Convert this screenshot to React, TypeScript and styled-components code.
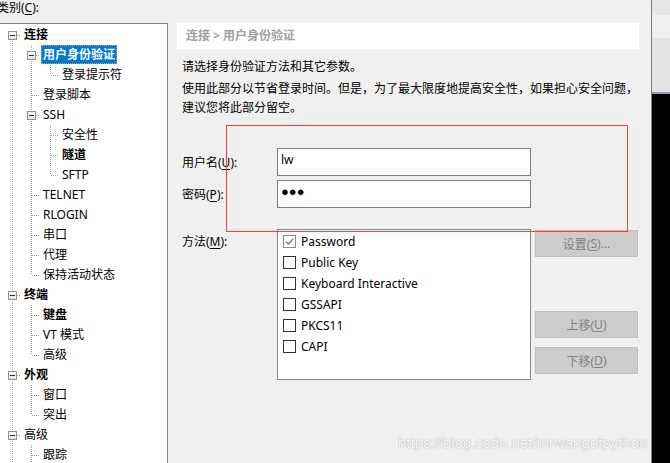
import React from "react";
import styled, { createGlobalStyle, css } from "styled-components";

const Global = createGlobalStyle`
  html, body { margin: 0; padding: 0; background: #f0f0f0; }
  body {
    width: 670px; height: 463px; overflow: hidden;
    font-family: "Noto Sans", "Noto Sans CJK SC", sans-serif;
    font-size: 12px; color: #000;
  }
  * { box-sizing: border-box; }
`;

const Screen = styled.div`
  position: relative;
  display: flex;
  width: 670px;
  height: 463px;
  overflow: hidden;
`;

const Dialog = styled.div`
  display: flex;
  width: 652px;
  height: 100%;
  border-right: 1px solid #7f7f7f;
  background: #f0f0f0;
`;

const Outside = styled.div`
  display: flex;
  flex-direction: column;
  width: 18px;
  height: 100%;
`;

const OutsideBand = styled.div<{ $h?: number; $c: string }>`
  height: ${(p) => (p.$h ? `${p.$h}px` : "auto")};
  flex: ${(p) => (p.$h ? "none" : "1")};
  background: ${(p) => p.$c};
`;

/* ---------- left: category tree ---------- */
const LeftCol = styled.div`
  display: flex;
  flex-direction: column;
  width: 168px;
  flex-shrink: 0;
`;

const CategoryLabel = styled.div`
  height: 23px;
  line-height: 15px;
  margin-left: -3px;
  white-space: nowrap;
`;

const Mn = styled.span`
  text-decoration: underline;
  text-underline-offset: 2px;
`;

const TreeBox = styled.div`
  flex: 1;
  background: #fff;
  border-top: 1px solid #828790;
  border-right: 1px solid #828790;
  padding: 1px 0 0 2px;
  overflow: hidden;
`;

const TreeRow = styled.div`
  display: flex;
  height: 20px;
`;

const dotV = css`
  background-image: linear-gradient(to bottom, #a0a0a0 50%, transparent 50%);
  background-size: 1px 2px;
`;
const dotH = css`
  background-image: linear-gradient(to right, #a0a0a0 50%, transparent 50%);
  background-size: 2px 1px;
`;

const GuideCell = styled.span<{ $up: boolean; $down: boolean; $h: boolean }>`
  position: relative;
  width: 19px;
  height: 20px;
  flex-shrink: 0;
  &::before {
    content: "";
    display: ${(p) => (p.$up || p.$down ? "block" : "none")};
    position: absolute;
    left: 10px;
    width: 1px;
    top: ${(p) => (p.$up ? "0" : "10px")};
    bottom: ${(p) => (p.$down ? "0" : "10px")};
    ${dotV}
  }
  &::after {
    content: "";
    display: ${(p) => (p.$h ? "block" : "none")};
    position: absolute;
    left: 11px;
    right: 0;
    top: 10px;
    height: 1px;
    ${dotH}
  }
`;

const Expander = styled.span`
  position: absolute;
  left: 6px;
  top: 6px;
  width: 9px;
  height: 9px;
  z-index: 1;
  border: 1px solid #919191;
  background: linear-gradient(#ffffff, #e2e2e2);
  &::after {
    content: "";
    position: absolute;
    left: 1px;
    top: 3px;
    width: 5px;
    height: 1px;
    background: #2a2a2a;
  }
`;

const TreeLabel = styled.span<{ $bold?: boolean; $sel?: boolean }>`
  height: 19px;
  line-height: 19px;
  margin-left: 1px;
  padding: 0 2px;
  white-space: nowrap;
  font-weight: ${(p) => (p.$bold ? 700 : 400)};
  ${(p) =>
    p.$sel &&
    css`
      background: #0078d7;
      color: #fff;
      outline: 1px dotted #e0a040;
      outline-offset: -1px;
    `}
`;

/* ---------- right: page ---------- */
const RightCol = styled.div`
  display: flex;
  flex-direction: column;
  width: 462px;
  margin-left: 9px;
  padding-top: 23px;
`;

const Breadcrumb = styled.div`
  height: 26px;
  line-height: 26px;
  background: #fff;
  padding-left: 9px;
  color: #a0a0a0;
  font-weight: 700;
`;

const Desc = styled.div<{ $mt: number }>`
  margin-top: ${(p) => p.$mt}px;
  padding-left: 5px;
  line-height: 19px;
  white-space: nowrap;
`;

const FormGrid = styled.div`
  display: grid;
  grid-template-columns: 91px 254px 103px;
  grid-template-rows: 28px 28px 13px auto;
  column-gap: 4px;
  row-gap: 4px;
  margin-top: 31px;
  padding-left: 5px;
`;

const FieldLabel = styled.div<{ $top?: boolean }>`
  line-height: 19px;
  white-space: nowrap;
  align-self: ${(p) => (p.$top ? "start" : "center")};
  margin-top: ${(p) => (p.$top ? "3px" : "0")};
`;

const Field = styled.div`
  grid-column: 2;
  height: 28px;
  border: 1px solid #7a7a7a;
  background: #fff;
  padding: 2px 0 0 3px;
  line-height: 18px;
`;

const Dots = styled.span`
  font-family: "Liberation Sans", "DejaVu Sans", sans-serif;
  font-size: 13px;
`;

const Spacer = styled.div`
  grid-column: 1 / -1;
`;

const MethodList = styled.div`
  height: 151px;
  border: 1px solid #828790;
  background: #fff;
  padding: 1px 0 0 5px;
`;

const MethodItem = styled.div`
  display: flex;
  align-items: center;
  gap: 5px;
  height: 21px;
  white-space: nowrap;
`;

const Check = styled.span<{ $on?: boolean }>`
  display: flex;
  align-items: center;
  justify-content: center;
  width: 13px;
  height: 13px;
  flex-shrink: 0;
  background: #fff;
  border: 1px solid ${(p) => (p.$on ? "#8a8a8a" : "#333")};
`;

const ButtonCol = styled.div`
  display: flex;
  flex-direction: column;
`;

const Btn = styled.div<{ $mt: number }>`
  display: flex;
  align-items: center;
  justify-content: center;
  width: 103px;
  height: 27px;
  margin-top: ${(p) => p.$mt}px;
  background: #cccccc;
  border: 1px solid #bfbfbf;
  color: #838383;
  white-space: nowrap;
`;

/* ---------- overlays ---------- */
const Annotation = styled.div`
  position: absolute;
  left: 226px;
  top: 125px;
  width: 402px;
  height: 107px;
  border: 1px solid #ff3a3a;
  pointer-events: none;
`;

const Watermark = styled.div`
  position: absolute;
  left: 398px;
  top: 434px;
  font-family: "Liberation Sans", Arial, sans-serif;
  font-size: 15px;
  line-height: 18px;
  color: rgba(255, 255, 255, 0.95);
  text-shadow: 0 0 1px rgba(0, 0, 0, 0.3), 0 0 2px rgba(0, 0, 0, 0.12);
  white-space: nowrap;
  pointer-events: none;
`;

type Node = { t: string; d: number; b?: boolean; kids?: boolean; sel?: boolean };

const tree: Node[] = [
  { t: "连接", d: 0, b: true, kids: true },
  { t: "用户身份验证", d: 1, b: true, kids: true, sel: true },
  { t: "登录提示符", d: 2 },
  { t: "登录脚本", d: 1 },
  { t: "SSH", d: 1, kids: true },
  { t: "安全性", d: 2 },
  { t: "隧道", d: 2, b: true },
  { t: "SFTP", d: 2 },
  { t: "TELNET", d: 1 },
  { t: "RLOGIN", d: 1 },
  { t: "串口", d: 1 },
  { t: "代理", d: 1 },
  { t: "保持活动状态", d: 1 },
  { t: "终端", d: 0, b: true, kids: true },
  { t: "键盘", d: 1, b: true },
  { t: "VT 模式", d: 1 },
  { t: "高级", d: 1 },
  { t: "外观", d: 0, b: true, kids: true },
  { t: "窗口", d: 1 },
  { t: "突出", d: 1 },
  { t: "高级", d: 0, kids: true },
  { t: "跟踪", d: 1 },
];

const isLast = (i: number) => {
  const d = tree[i].d;
  for (let j = i + 1; j < tree.length; j++) {
    if (tree[j].d < d) return true;
    if (tree[j].d === d) return false;
  }
  return false;
};

const ancestorAt = (i: number, depth: number) => {
  for (let j = i - 1; j >= 0; j--) if (tree[j].d === depth) return j;
  return -1;
};

const Tree: React.FC = () => (
  <TreeBox>
    {tree.map((n, i) => {
      const cells: React.ReactNode[] = [];
      for (let k = 0; k < n.d; k++) {
        const a = ancestorAt(i, k);
        const pipe = a >= 0 && !isLast(a);
        cells.push(<GuideCell key={k} $up={pipe} $down={pipe} $h={false} />);
      }
      cells.push(
        <GuideCell key="self" $up={i !== 0} $down={!isLast(i)} $h>
          {n.kids && <Expander />}
        </GuideCell>
      );
      return (
        <TreeRow key={i}>
          {cells}
          <TreeLabel $bold={n.b} $sel={n.sel}>
            {n.t}
          </TreeLabel>
        </TreeRow>
      );
    })}
  </TreeBox>
);

const methods = [
  { t: "Password", on: true },
  { t: "Public Key" },
  { t: "Keyboard Interactive" },
  { t: "GSSAPI" },
  { t: "PKCS11" },
  { t: "CAPI" },
];

export default function App() {
  return (
    <>
      <Global />
      <Screen>
        <Dialog>
          <LeftCol>
            <CategoryLabel>
              类别(<Mn>C</Mn>):
            </CategoryLabel>
            <Tree />
          </LeftCol>
          <RightCol>
            <Breadcrumb>连接 &gt; 用户身份验证</Breadcrumb>
            <Desc $mt={8}>请选择身份验证方法和其它参数。</Desc>
            <Desc $mt={3}>
              使用此部分以节省登录时间。但是，为了最大限度地提高安全性，如果担心安全问题，
              <br />
              建议您将此部分留空。
            </Desc>
            <FormGrid>
              <FieldLabel>
                用户名(<Mn>U</Mn>):
              </FieldLabel>
              <Field>lw</Field>
              <div />
              <FieldLabel>
                密码(<Mn>P</Mn>):
              </FieldLabel>
              <Field>
                <Dots>●●●</Dots>
              </Field>
              <div />
              <Spacer />
              <FieldLabel $top>
                方法(<Mn>M</Mn>):
              </FieldLabel>
              <MethodList>
                {methods.map((m) => (
                  <MethodItem key={m.t}>
                    <Check $on={m.on}>
                      {m.on && (
                        <svg width="11" height="11" viewBox="0 0 11 11">
                          <path d="M1.8 5.6 L4.3 8.1 L9.4 2.6" fill="none" stroke="#6f6f6f" strokeWidth="1.3" />
                        </svg>
                      )}
                    </Check>
                    {m.t}
                  </MethodItem>
                ))}
              </MethodList>
              <ButtonCol>
                <Btn $mt={1}>
                  设置(<Mn>S</Mn>)...
                </Btn>
                <Btn $mt={54}>
                  上移(<Mn>U</Mn>)
                </Btn>
                <Btn $mt={9}>
                  下移(<Mn>D</Mn>)
                </Btn>
              </ButtonCol>
            </FormGrid>
          </RightCol>
        </Dialog>
        <Outside>
          <OutsideBand $h={15} $c="#e6e6e6" />
          <OutsideBand $h={23} $c="#f0f0f0" />
          <OutsideBand $h={54} $c="#e3e3e3" />
          <OutsideBand $h={2} $c="#8f9fb3" />
          <OutsideBand $c="#000" />
        </Outside>
        <Annotation />
        <Watermark>https://blog.csdn.net/mrwangofpython</Watermark>
      </Screen>
    </>
  );
}
